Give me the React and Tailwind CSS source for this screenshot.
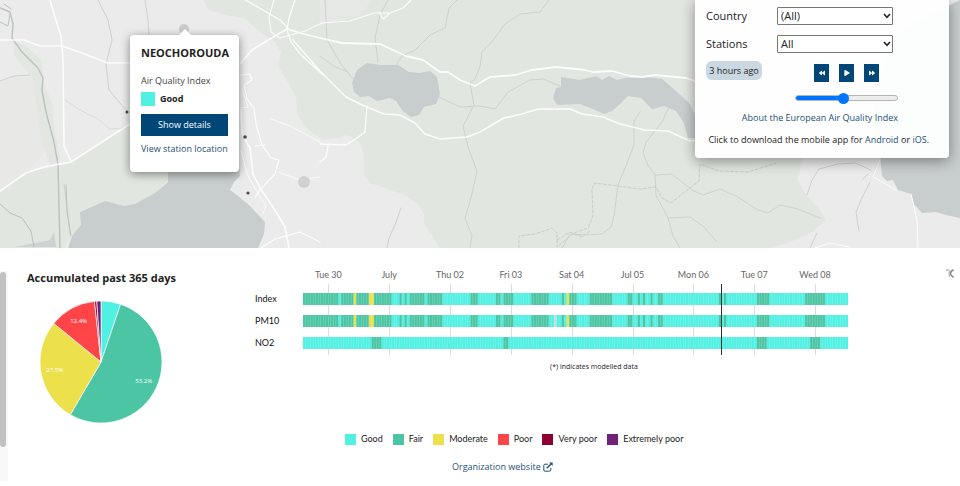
import React, { useState } from "react";
import { FaBackward, FaForward, FaPlay } from "react-icons/fa";

const COLORS = {
  good: "#50f0e2",
  fair: "#4bc5a3",
  moderate: "#ece04b",
  poor: "#ff4548",
  veryPoor: "#8d002f",
  extremelyPoor: "#6f2277",
  none: "#c8dcdc",
};

const legend = [
  { name: "Good", color: "bg-[#50f0e2]" },
  { name: "Fair", color: "bg-[#4bc5a3]" },
  { name: "Moderate", color: "bg-[#ece04b]" },
  { name: "Poor", color: "bg-[#ff4548]" },
  { name: "Very poor", color: "bg-[#8d002f]" },
  { name: "Extremely poor", color: "bg-[#6f2277]" },
];

const slices = [
  { level: "good", value: 5.2 },
  { level: "fair", value: 53.2, label: "53.2%" },
  { level: "moderate", value: 27.5, label: "27.5%" },
  { level: "poor", value: 12.4, label: "12.4%" },
  { level: "veryPoor", value: 0.6 },
  { level: "extremelyPoor", value: 1.1 },
];

const HOURS = 215;
const NOW = 165;

const days = [
  { name: "Tue 30", hour: 10 },
  { name: "July", hour: 34 },
  { name: "Thu 02", hour: 58 },
  { name: "Fri 03", hour: 82 },
  { name: "Sat 04", hour: 106 },
  { name: "Jul 05", hour: 130 },
  { name: "Mon 06", hour: 154 },
  { name: "Tue 07", hour: 178 },
  { name: "Wed 08", hour: 202 },
];

// [from hour, to hour, level], every hour left out is "good"
const indexRuns = [
  [0, 14, "fair"],
  [15, 20, "fair"],
  [20, 21, "moderate"],
  [21, 26, "fair"],
  [26, 28, "moderate"],
  [28, 35, "fair"],
  [38, 39, "fair"],
  [40, 41, "fair"],
  [42, 48, "fair"],
  [49, 55, "fair"],
  [66, 69, "fair"],
  [76, 78, "fair"],
  [79, 83, "fair"],
  [90, 97, "fair"],
  [102, 103, "fair"],
  [104, 105, "moderate"],
  [105, 108, "fair"],
  [113, 122, "fair"],
  [128, 130, "fair"],
  [132, 133, "fair"],
  [134, 135, "fair"],
  [137, 138, "fair"],
  [140, 142, "fair"],
  [164, 165, "fair"],
  [166, 167, "fair"],
  [179, 184, "fair"],
  [198, 206, "fair"],
];

const rows = [
  { name: "Index", runs: indexRuns },
  { name: "PM10", runs: [...indexRuns, [99, 100, "none"]] },
  {
    name: "NO2",
    runs: [
      [27, 31, "fair"],
      [79, 81, "fair"],
      [179, 183, "fair"],
      [200, 204, "fair"],
    ],
  },
];

const MapDrawing = () => (
  <svg
    viewBox="0 0 960 248"
    preserveAspectRatio="xMidYMid slice"
    className="absolute inset-0 h-full w-full"
    fill="none"
    strokeLinejoin="round"
    strokeLinecap="round"
    aria-hidden="true"
  >
    <rect width="960" height="248" fill="#ebebeb" />

    {/* green land */}
    <g fill="#e1e6e0">
      <path d="M204 0 L208 10 L222 14 L243 18 L262 33 L275 42 L281 52 L278 66 L288 82 L296 96 L297 112 L304 126 L313 133 L322 139 L340 138 L346 135 L352 137 L360 143 L364 155 L364 175 L370 183 L385 188 L404 195 L418 204 L424 215 L424 224 L433 236 L439 248 H770 L790 242 L812 232 L826 220 L818 208 L806 195 L797 178 L803 160 L806 120 L850 60 L860 0 Z" />
      <path d="M0 190 L28 172 L70 163 L128 125 L170 140 L168 180 L155 193 L135 204 L124 206 L105 201 L80 211 L82 225 L68 240 L64 248 H0 Z" />
      <path d="M14 42 L26 46 L42 60 L44 85 L52 102 L54 125 L60 160 L50 166 L42 140 L36 105 L34 80 L14 55 Z" opacity="0.8" />
      <path d="M0 82 L14 76 L34 78 L40 110 L46 150 L30 170 L0 190 Z" opacity="0.35" />
    </g>
    <path d="M320 0 H372 L360 16 L340 21 L320 25 Z" fill="#e5e8e4" />

    {/* water */}
    <g fill="#c8cdce">
      <path d="M168 172 L168 182 L155 193 L135 204 L124 206 L105 201 L80 212 L81 225 L72 236 L68 248 H258 L264 234 L265 222 L250 206 L238 196 L230 190 L234 182 L240 176 L239 165 Z" />
      <path d="M352 83 L357 70 L367 63 L380 65 L398 65 L409 72 L419 73 L430 71 L437 77 L440 94 L436 104 L424 107 L419 115 L411 117 L402 110 L396 101 L390 98 L377 101 L369 96 L360 97 L354 92 Z" />
      <path d="M561 77 L580 80 L596 76 L602 80 L609 76 L617 80 L626 78 L645 77 L662 79 L676 91 L690 104 L697 120 L696 138 L688 138 L684 123 L676 111 L664 106 L652 109 L641 98 L628 96 L620 104 L612 111 L604 114 L593 109 L580 104 L557 105 L553 98 L556 88 L561 87 Z" />
      <path d="M960 0 L900 30 L872 90 L880 155 L882 176 L887 181 L893 180 L898 190 L911 194 L914 204 L922 213 L936 212 L946 215 L960 218 Z" />
      <path d="M14 247 L36 243 L50 240 L54 232 L56 247 Z" opacity="0.8" />
    </g>

    {/* small roads and rivers */}
    <g stroke="#cdd2ce" strokeWidth="1">
      <path d="M98 0 L108 20 L112 40 L106 64 L109 90 L120 103 L127 111" />
      <path d="M145 0 L148 20 L149 36" />
      <path d="M62 98 L80 110 L98 119 L110 129 L124 128" opacity="0.6" />
      <path d="M0 81 L14 76 L30 75" />
      <path d="M64 184 L68 215 L70 234" />
      <path d="M325 0 L327 40 L341 64 L353 79" />
      <path d="M320 56 L335 67 L348 72" />
      <path d="M388 0 L380 15 L375 38 L378 62" />
      <path d="M457 0 L449 8 L445 28 L430 35 L415 50 L402 56 L396 65" />
      <path d="M549 0 L540 12 L520 14 L504 25 L495 38 L482 52 L480 67 L475 79 L470 83 L474 105 L463 126 L468 147 L477 171 L471 198 L465 218 L472 236 L470 248" />
      <path d="M439 97 L460 107 L480 106 L495 109 L508 92 L530 80 L543 79 L560 86" />
      <path d="M401 208 L395 225 L389 238 L387 248" />
      <path d="M640 112 L634 121 L634 145 L626 166 L618 185 L614 216 L611 227 L602 234 L585 235 L570 234 L562 248" />
      <path d="M669 107 L662 122 L646 142 L643 153 L648 165 L655 175 L672 174 L692 190 L703 195 L720 189 L736 196 L758 210 L768 213 L780 205 L798 209 L820 218" />
      <path d="M655 175 L656 195 L668 218 L673 236 L680 248" />
      <path d="M668 218 L690 217 L704 227 L716 241" />
      <path d="M807 195 L812 180 L819 169 L838 164 L855 163 L871 170" />
      <path d="M870 182 L861 200 L856 212 L859 231" />
      <path d="M810 248 L817 233 M862 180 L868 174" />
    </g>
    <g stroke="#c9cfca" strokeWidth="1" strokeDasharray="3 2">
      <path d="M519 248 L519 236 L535 234 L552 228 L557 233 L557 247 L574 233 L588 228 L593 216 L592 190 L594 183 L618 186 L640 189 L656 187 L662 198 L671 203 L686 191 L699 181 L700 164 L719 171 L748 172 L776 163" />
      <path d="M557 240 L570 232 L582 237 L590 231" />
    </g>
    <g stroke="#bcc1bf" strokeWidth="1">
      <path d="M0 8 L10 12 L13 24 L12 38 L22 52 L38 68 L43 78 L42 90 L46 112 L54 142 L58 165 L60 248" strokeWidth="1.4" />
      <path d="M0 22 L8 26 L10 14 M4 4 L11 9" />
      <path d="M0 204 L10 213 L22 218 L31 231 L34 247" />
      <path d="M66 185 L67 212 L71 236" />
    </g>

    {/* main roads */}
    <g stroke="#fbfcfb">
      <path d="M50 0 L54 14 L61 36 L63 60 L64 146 L71 161" strokeWidth="1.6" />
      <path d="M0 40 L24 40 L40 46 L62 46 L82 53 L108 63 L130 63" strokeWidth="1.4" />
      <path d="M0 191 L26 173 L44 167 L71 162 L130 124" strokeWidth="1.6" />
      <path d="M240 64 L252 50 L270 39 L287 29 L304 34 L320 38 L342 43 L380 44 L406 56 L423 60 L440 72 L448 72 L460 80 L475 86 L490 77 L515 75 L532 70 L556 67 L585 70 L593 72 L612 71 L630 76 L642 77 L655 75 L686 78 L720 90" strokeWidth="1.8" />
      <path d="M293 40 L320 71 L346 97 L362 105 L384 114 L400 115 L415 123 L425 134 L440 139 L467 137 L480 132 L504 118 L522 114 L538 109 L570 109 L582 114 L603 117 L620 124 L645 130 L668 131 L690 141 L710 139" strokeWidth="1.5" />
      <path d="M245 0 L263 10 L280 20 L288 28 M295 0 L289 18 L287 30 L291 42 L301 55 L322 74" strokeWidth="1.3" />
      <path d="M274 0 L269 17 L271 32 L280 38 L305 31 L322 23 L350 21 L374 13 L390 13 L403 8 L411 0 M379 12 L383 19 L389 14" strokeWidth="1.1" />
      <path d="M240 75 L250 74 L252 80 L244 85 L247 99 L254 108 L256 124 L262 145 L271 158 L279 160 L275 174 L260 190 L255 198" strokeWidth="1.2" />
      <path d="M241 110 L242 134 L250 148 L253 174 L260 188 L273 207 L285 227 L289 248" strokeWidth="1.6" />
      <path d="M241 150 L247 174 L256 190 L266 206 L263 214 M255 146 L265 145 M240 108 L248 107 L242 89" strokeWidth="1" />
      <path d="M320 144 L346 145 L357 138 L365 132 L367 106 M328 146 L326 157 L320 162" strokeWidth="1.3" />
      <path d="M261 248 L275 239 L300 232 L320 242" strokeWidth="1.2" />
      <path d="M271 119 L290 126 L320 142 M278 172 L300 180 L320 177" strokeWidth="0.8" />
      <path d="M880 160 L873 177 L884 183 L896 190 M911 194 L917 220 L918 248 M815 248 L830 243 L850 247" strokeWidth="1" />
    </g>

    {/* stations */}
    <circle cx="184" cy="29" r="5" fill="#cacccc" />
    <circle cx="304" cy="182" r="6" fill="#d0d1d1" />
    <g fill="#4a4c4d">
      <circle cx="127" cy="112" r="1.5" />
      <circle cx="245" cy="137" r="1.8" />
      <circle cx="248" cy="193" r="1.6" />
    </g>
  </svg>
);

const StationPopup = () => (
  <div className="absolute left-[130px] top-[35px] w-[109px] rounded-sm bg-white px-[11px] pb-[17px] pt-3 text-[9px] text-[#444] shadow-[0_2px_10px_rgba(0,0,0,0.45)]">
    <div className="absolute -top-[6px] left-1/2 h-0 w-0 -translate-x-1/2 border-x-8 border-b-8 border-x-transparent border-b-white" />
    <h2 className="whitespace-nowrap text-[11px] font-bold leading-3 text-[#222]">
      NEOCHOROUDA
    </h2>
    <p className="mt-4 leading-3">Air Quality Index</p>
    <div className="mt-1 flex h-4 items-center gap-[5px]">
      <span className="h-[14px] w-[14px] bg-[#50f0e2]" />
      <span className="font-bold text-[#222]">Good</span>
    </div>
    <button
      type="button"
      className="mt-[7px] block h-[22px] w-full bg-[#004677] text-[9px] text-white"
    >
      Show details
    </button>
    <a
      href="#location"
      className="mt-[7px] block whitespace-nowrap leading-3 text-[#1c5178]"
    >
      View station location
    </a>
  </div>
);

const SelectField = ({ id, label, options }) => (
  <div className="flex items-center">
    <label htmlFor={id} className="w-[71px] text-[11px]">
      {label}
    </label>
    <div className="relative w-[116px]">
      <select
        id={id}
        className="block h-[18px] w-full appearance-none rounded-[1px] border border-[#777] bg-white pl-[3px] text-[11px] leading-4"
      >
        {options.map((o) => (
          <option key={o}>{o}</option>
        ))}
      </select>
      <svg
        viewBox="0 0 8 6"
        className="pointer-events-none absolute right-[2px] top-[6px] h-[6px] w-2"
        fill="none"
        stroke="#222"
        strokeWidth="1.6"
      >
        <path d="M1 1 L4 4.4 L7 1" />
      </svg>
    </div>
  </div>
);

const playerButtons = [
  { title: "Backward", icon: FaBackward },
  { title: "Play", icon: FaPlay },
  { title: "Forward", icon: FaForward },
];

const FilterPanel = () => {
  const [time, setTime] = useState(47);

  return (
    <div className="absolute right-[11px] top-0 w-[254px] rounded-b-sm bg-white/95 px-[11px] pb-3 pt-[7px] text-[#222] shadow-[0_3px_14px_rgba(0,0,0,0.4)]">
      <div className="flex flex-col gap-[10px]">
        <SelectField id="country" label="Country" options={["(All)"]} />
        <SelectField id="stations" label="Stations" options={["All"]} />
      </div>
      <div className="mt-2 flex items-start">
        <span className="w-14 whitespace-nowrap rounded-md bg-[#cbd8e2] text-center text-[9px] leading-[19px]">
          3 hours ago
        </span>
        <div className="ml-[52px] mt-[3px] flex gap-[10px]">
          {playerButtons.map(({ title, icon: Icon }) => (
            <button
              key={title}
              type="button"
              aria-label={title}
              className="flex h-[18px] w-[15px] items-center justify-center bg-[#004677] text-white"
            >
              <Icon size={6} />
            </button>
          ))}
        </div>
      </div>
      <input
        type="range"
        aria-label="Time"
        min="0"
        max="100"
        value={time}
        onChange={(e) => setTime(Number(e.target.value))}
        className="ml-[89px] mt-[13px] block h-[6px] w-[103px] appearance-none rounded-full border border-[#b5b5b5] [&::-webkit-slider-thumb]:h-[11px] [&::-webkit-slider-thumb]:w-[11px] [&::-webkit-slider-thumb]:appearance-none [&::-webkit-slider-thumb]:rounded-full [&::-webkit-slider-thumb]:bg-[#0075ff]"
        style={{
          background: `linear-gradient(to right, #0075ff ${time}%, #ededed ${time}%) border-box`,
        }}
      />
      <div className="mr-10 mt-[10px] text-right text-[9px] leading-[14px]">
        <a href="#about" className="text-[#1c5178]">
          About the European Air Quality Index
        </a>
      </div>
      <p className="mr-[9px] mt-2 whitespace-nowrap text-right text-[9px] leading-[13px]">
        Click to download the mobile app for{" "}
        <a href="#android" className="text-[#1c5178]">
          Android
        </a>{" "}
        or{" "}
        <a href="#ios" className="text-[#1c5178]">
          iOS
        </a>
        .
      </p>
    </div>
  );
};

const PieChart = () => {
  const total = slices.reduce((sum, s) => sum + s.value, 0);
  const point = (part, r) => {
    const angle = (part / total) * Math.PI * 2;
    return [61 + r * Math.sin(angle), 61 - r * Math.cos(angle)];
  };
  let start = 0;
  const parts = slices.map((s) => {
    const from = start;
    start += s.value;
    const [x1, y1] = point(from, 61);
    const [x2, y2] = point(start, 61);
    const [tx, ty] = point(from + s.value / 2, 47);
    const large = s.value > total / 2 ? 1 : 0;
    return { ...s, tx, ty, d: `M61 61 L${x1} ${y1} A61 61 0 ${large} 1 ${x2} ${y2} Z` };
  });

  return (
    <svg viewBox="0 0 122 122" className="ml-[13px] mt-4 h-[122px] w-[122px]">
      {parts.map((p) => (
        <path key={p.level} d={p.d} fill={COLORS[p.level]} stroke="#fff" strokeWidth="0.7" />
      ))}
      {parts
        .filter((p) => p.label)
        .map((p) => (
          <text key={p.level} x={p.tx} y={p.ty + 2} fill="#fff" fontSize="6" textAnchor="middle">
            {p.label}
          </text>
        ))}
    </svg>
  );
};

const HourBar = ({ runs }) => (
  <svg
    viewBox={`0 0 ${HOURS} 12`}
    preserveAspectRatio="none"
    className="relative block h-3 w-full"
    aria-hidden="true"
  >
    <rect width={HOURS} height="12" fill={COLORS.good} />
    {runs.map(([from, to, level]) => (
      <rect key={from} x={from} width={to - from} height="12" fill={COLORS[level]} />
    ))}
    {Array.from({ length: HOURS - 1 }, (_, i) => (
      <rect key={i} x={i + 0.9} width="0.2" height="12" fill="#fff" opacity="0.35" />
    ))}
  </svg>
);

const Timeline = () => (
  <div className="flex font-['Lato',sans-serif] text-[9px]">
    <div className="flex w-12 flex-col gap-[10px] pt-[25px]">
      {rows.map((r) => (
        <div key={r.name} className="h-3 leading-3 text-[#111]">
          {r.name}
        </div>
      ))}
    </div>
    <div className="relative min-w-0 flex-1">
      <div className="relative h-4 text-[#666]">
        {days.map((d) => (
          <span
            key={d.name}
            className="absolute top-0 -translate-x-1/2 whitespace-nowrap leading-[14px]"
            style={{ left: `${(d.hour / HOURS) * 100}%` }}
          >
            {d.name}
          </span>
        ))}
      </div>
      <div className="relative flex flex-col gap-[10px] pb-[6px] pt-[9px]">
        {days.map((d) => (
          <span
            key={d.name}
            className="absolute inset-y-0 w-px bg-[#dcdcdc]"
            style={{ left: `${(d.hour / HOURS) * 100}%` }}
          />
        ))}
        {rows.map((r) => (
          <HourBar key={r.name} runs={r.runs} />
        ))}
        <span
          className="absolute inset-y-0 w-px bg-[#333]"
          style={{ left: `${(NOW / HOURS) * 100}%` }}
        />
      </div>
    </div>
  </div>
);

const ExternalIcon = () => (
  <svg viewBox="0 0 10 10" className="h-[10px] w-[10px]" fill="none" stroke="currentColor">
    <path d="M5 2.2 H2 Q0.8 2.2 0.8 3.4 V8 Q0.8 9.2 2 9.2 H6.6 Q7.8 9.2 7.8 8 V6" />
    <path d="M3.8 6.2 L8 2" strokeWidth="1.5" />
    <path d="M6 0.5 H9.6 V4.1 Z" fill="currentColor" stroke="none" />
  </svg>
);

const App = () => (
  <div className="bg-white font-['Open_Sans',sans-serif] text-[#222]">
    <section className="relative h-[248px] overflow-hidden">
      <MapDrawing />
      <StationPopup />
      <FilterPanel />
    </section>

    <section className="flex items-start pt-[23px]">
      <div className="h-[210px] w-2 shrink-0 bg-[#f8f8f8] pt-px">
        <div className="h-[175px] w-[6px] rounded-full bg-[#c1c1c1]" />
      </div>
      <div className="w-[247px] shrink-0 pl-[19px]">
        <h2 className="text-[11px] font-bold leading-[14px]">Accumulated past 365 days</h2>
        <PieChart />
      </div>
      <div className="-mt-[3px] min-w-0 flex-1">
        <Timeline />
        <p className="mt-[6px] pl-[85px] text-center text-[7px] leading-3">
          (*) indicates modelled data
        </p>
        <ul className="ml-[90px] mt-[60px] flex gap-[10px] font-['Lato',sans-serif] text-[9px] leading-3">
          {legend.map((l) => (
            <li key={l.name} className="flex items-center gap-[5px] whitespace-nowrap">
              <span className={`h-[11px] w-[11px] ${l.color}`} />
              {l.name}
            </li>
          ))}
        </ul>
        <div className="ml-[197px] mt-4 text-[9px] leading-3">
          <a href="#organization" className="inline-flex items-center gap-[2px] text-[#1c5178]">
            Organization website
            <ExternalIcon />
          </a>
        </div>
      </div>
      <div className="-mt-[2px] flex w-28 shrink-0 justify-end pr-[5px]">
        <svg viewBox="0 0 9 9" className="h-[9px] w-[9px]" fill="none" stroke="#8a8a8a">
          <path d="M0 1 H2.5" />
          <path d="M3.2 0.8 V8" stroke="#aaa" />
          <path d="M7.6 0.8 Q4.2 2.6 4.4 4.5 Q4.6 6.6 7.6 8.2" strokeWidth="1.6" />
        </svg>
      </div>
    </section>
  </div>
);

export default App;
